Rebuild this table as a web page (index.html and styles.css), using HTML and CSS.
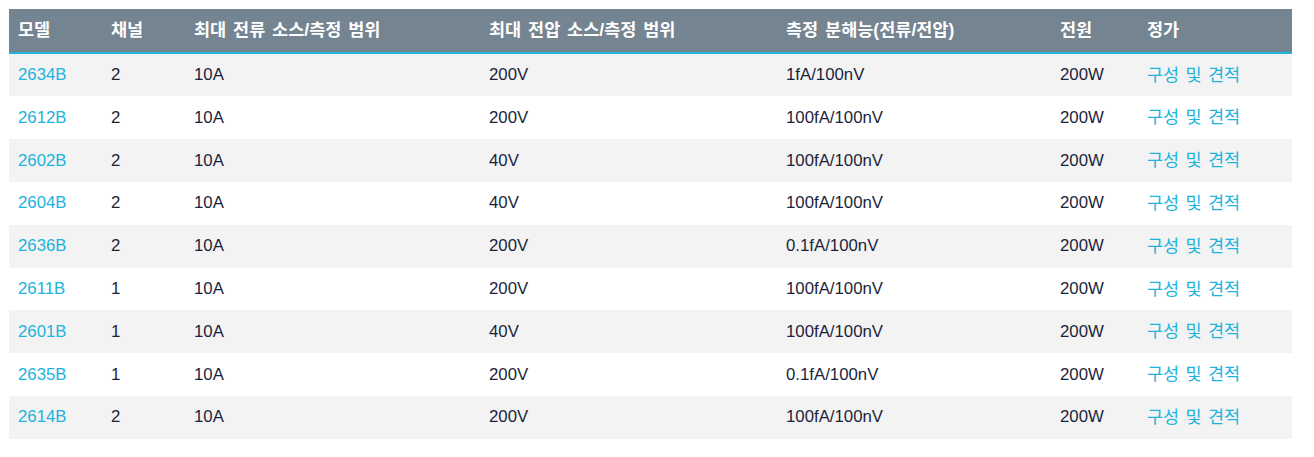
FILE: index.html
```html
<!DOCTYPE html>
<html lang="ko">
<head>
<meta charset="utf-8">
<title>모델 비교</title>
<link rel="stylesheet" href="styles.css">
</head>
<body>
<table class="spec-table">
  <colgroup>
    <col class="c-model"><col class="c-ch"><col class="c-cur"><col class="c-volt"><col class="c-res"><col class="c-pow"><col class="c-price">
  </colgroup>
  <thead>
    <tr>
      <th>모델</th><th>채널</th><th>최대 전류 소스/측정 범위</th><th>최대 전압 소스/측정 범위</th><th>측정 분해능(전류/전압)</th><th>전원</th><th>정가</th>
    </tr>
  </thead>
  <tbody>
    <tr><td><a class="link" href="#">2634B</a></td><td>2</td><td>10A</td><td>200V</td><td>1fA/100nV</td><td>200W</td><td><a class="link link-ko" href="#">구성 및 견적</a></td></tr>
    <tr><td><a class="link" href="#">2612B</a></td><td>2</td><td>10A</td><td>200V</td><td>100fA/100nV</td><td>200W</td><td><a class="link link-ko" href="#">구성 및 견적</a></td></tr>
    <tr><td><a class="link" href="#">2602B</a></td><td>2</td><td>10A</td><td>40V</td><td>100fA/100nV</td><td>200W</td><td><a class="link link-ko" href="#">구성 및 견적</a></td></tr>
    <tr><td><a class="link" href="#">2604B</a></td><td>2</td><td>10A</td><td>40V</td><td>100fA/100nV</td><td>200W</td><td><a class="link link-ko" href="#">구성 및 견적</a></td></tr>
    <tr><td><a class="link" href="#">2636B</a></td><td>2</td><td>10A</td><td>200V</td><td>0.1fA/100nV</td><td>200W</td><td><a class="link link-ko" href="#">구성 및 견적</a></td></tr>
    <tr><td><a class="link" href="#">2611B</a></td><td>1</td><td>10A</td><td>200V</td><td>100fA/100nV</td><td>200W</td><td><a class="link link-ko" href="#">구성 및 견적</a></td></tr>
    <tr><td><a class="link" href="#">2601B</a></td><td>1</td><td>10A</td><td>40V</td><td>100fA/100nV</td><td>200W</td><td><a class="link link-ko" href="#">구성 및 견적</a></td></tr>
    <tr><td><a class="link" href="#">2635B</a></td><td>1</td><td>10A</td><td>200V</td><td>0.1fA/100nV</td><td>200W</td><td><a class="link link-ko" href="#">구성 및 견적</a></td></tr>
    <tr><td><a class="link" href="#">2614B</a></td><td>2</td><td>10A</td><td>200V</td><td>100fA/100nV</td><td>200W</td><td><a class="link link-ko" href="#">구성 및 견적</a></td></tr>
  </tbody>
</table>
</body>
</html>
```
FILE: styles.css
```css
html, body {
  margin: 0;
  padding: 0;
  background: #ffffff;
}
body {
  padding: 9px;
  font-family: "Liberation Sans", "Noto Sans CJK KR", Arial, sans-serif;
  font-size: 16.8px;
  color: #1b1f3b;
}
.spec-table {
  width: 1283px;
  table-layout: fixed;
  border-collapse: collapse;
  border-spacing: 0;
}
.c-model { width: 93px; }
.c-ch { width: 83px; }
.c-cur { width: 295px; }
.c-volt { width: 297px; }
.c-res { width: 274px; }
.c-pow { width: 87px; }
.c-price { width: 154px; }
.spec-table th {
  background: #758491;
  color: #ffffff;
  font-size: 17.5px;
  font-weight: 700;
  text-align: left;
  padding: 0 9px;
  height: 42.7px;
  line-height: 22px;
  border-bottom: 2px solid #1fb6dd;
  word-spacing: 2px;
  vertical-align: middle;
  white-space: nowrap;
}
.spec-table td {
  padding: 0 9px;
  height: 42.8px;
  line-height: 22px;
  vertical-align: middle;
  white-space: nowrap;
}
.spec-table tbody tr:nth-child(odd) td {
  background: #f3f3f3;
}
.link {
  color: #20b3dc;
  text-decoration: none;
}
.link-ko {
  font-size: 17.5px;
  word-spacing: 1.5px;
}
```
